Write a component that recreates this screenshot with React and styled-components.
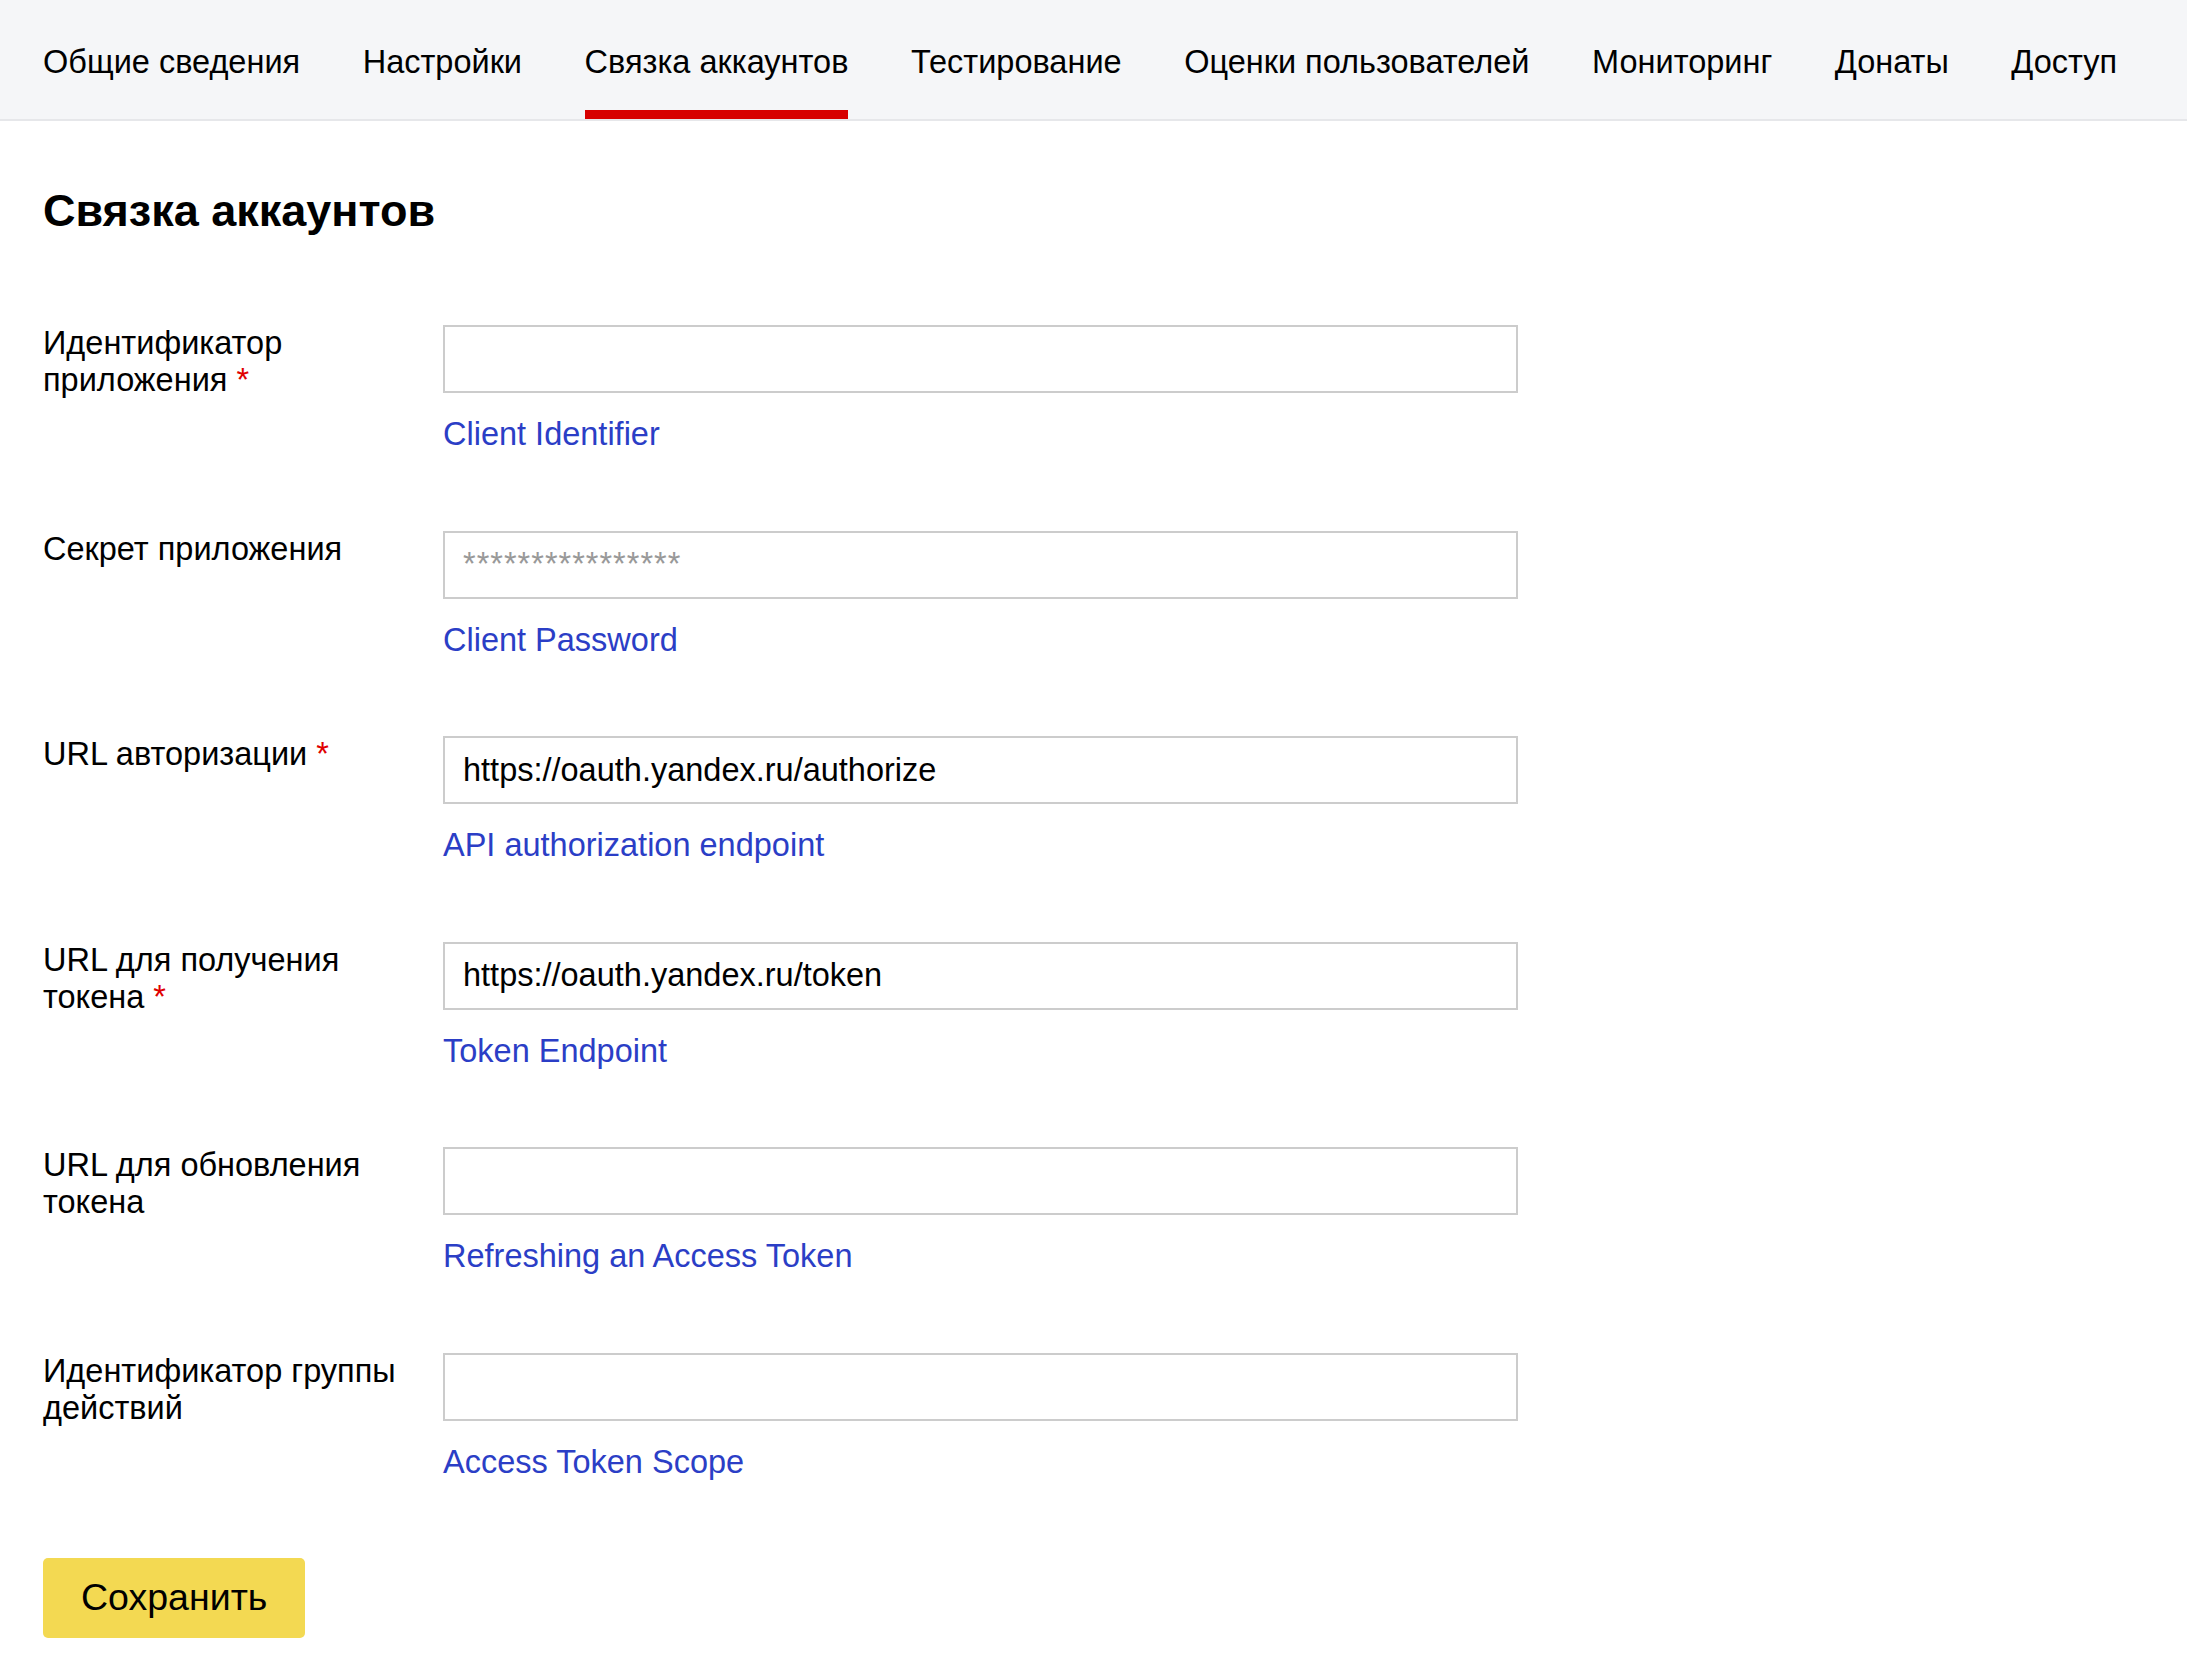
import React from "react";
import { createGlobalStyle, styled } from "styled-components";

const Global = createGlobalStyle`
  html, body {
    margin: 0;
    padding: 0;
    background: #fff;
    font-family: "Liberation Sans", Arial, sans-serif;
    color: #000;
  }
`;

const Header = styled.nav`
  display: flex;
  gap: 62.5px;
  padding: 0 43px;
  height: 121px;
  box-sizing: border-box;
  background: #f5f6f8;
  border-bottom: 2px solid #e6e7ea;
`;

const Tab = styled.a`
  display: block;
  box-sizing: border-box;
  height: 119px;
  padding-top: 44px;
  font-size: 32.5px;
  line-height: 37px;
  color: #000;
  white-space: nowrap;
  cursor: pointer;
  border-bottom: 9px solid ${(p) => (p.$active ? "#d70000" : "transparent")};
`;

const Main = styled.main`
  padding: 0 43px 40px;
`;

const Title = styled.h1`
  margin: 65px 0 89px;
  font-size: 45px;
  line-height: 50px;
  font-weight: 700;
`;

const Form = styled.form`
  display: flex;
  flex-direction: column;
  gap: 77.5px;
`;

const Row = styled.div`
  display: grid;
  grid-template-columns: 400px 1075px;
  align-items: start;
`;

const Label = styled.label`
  font-size: 32.5px;
  line-height: 37px;
  padding-right: 30px;
`;

const Star = styled.span`
  color: #e00000;
`;

const Field = styled.div`
  display: flex;
  flex-direction: column;
  gap: 23px;
`;

const Input = styled.input`
  box-sizing: border-box;
  width: 100%;
  height: 68px;
  border: 2px solid #cccccc;
  padding: 0 18px;
  font-family: inherit;
  font-size: 32.5px;
  color: #000;
  outline: none;

  &::placeholder {
    color: #999;
    letter-spacing: 1px;
  }
`;

const Help = styled.a`
  font-size: 32.5px;
  line-height: 37px;
  color: #2b3ec6;
  text-decoration: none;
  align-self: flex-start;
`;

const Save = styled.button`
  margin-top: 77px;
  height: 80px;
  padding: 0 38px;
  border: none;
  border-radius: 5px;
  background: #f3d952;
  font-family: inherit;
  font-size: 37.5px;
  color: #000;
  cursor: pointer;
`;

const tabs = [
  "Общие сведения",
  "Настройки",
  "Связка аккаунтов",
  "Тестирование",
  "Оценки пользователей",
  "Мониторинг",
  "Донаты",
  "Доступ",
];

const fields = [
  { label: "Идентификатор приложения", required: true, help: "Client Identifier" },
  { label: "Секрет приложения", placeholder: "****************", help: "Client Password" },
  {
    label: "URL авторизации",
    required: true,
    value: "https://oauth.yandex.ru/authorize",
    help: "API authorization endpoint",
  },
  {
    label: "URL для получения токена",
    required: true,
    value: "https://oauth.yandex.ru/token",
    help: "Token Endpoint",
  },
  { label: "URL для обновления токена", help: "Refreshing an Access Token" },
  { label: "Идентификатор группы действий", help: "Access Token Scope" },
];

export default function App() {
  return (
    <>
      <Global />
      <Header>
        {tabs.map((t) => (
          <Tab key={t} $active={t === "Связка аккаунтов"}>
            {t}
          </Tab>
        ))}
      </Header>
      <Main>
        <Title>Связка аккаунтов</Title>
        <Form onSubmit={(e) => e.preventDefault()}>
          {fields.map((f) => (
            <Row key={f.label}>
              <Label>
                {f.label}
                {f.required && <Star> *</Star>}
              </Label>
              <Field>
                <Input defaultValue={f.value} placeholder={f.placeholder} />
                <Help>{f.help}</Help>
              </Field>
            </Row>
          ))}
        </Form>
        <Save type="button">Сохранить</Save>
      </Main>
    </>
  );
}
